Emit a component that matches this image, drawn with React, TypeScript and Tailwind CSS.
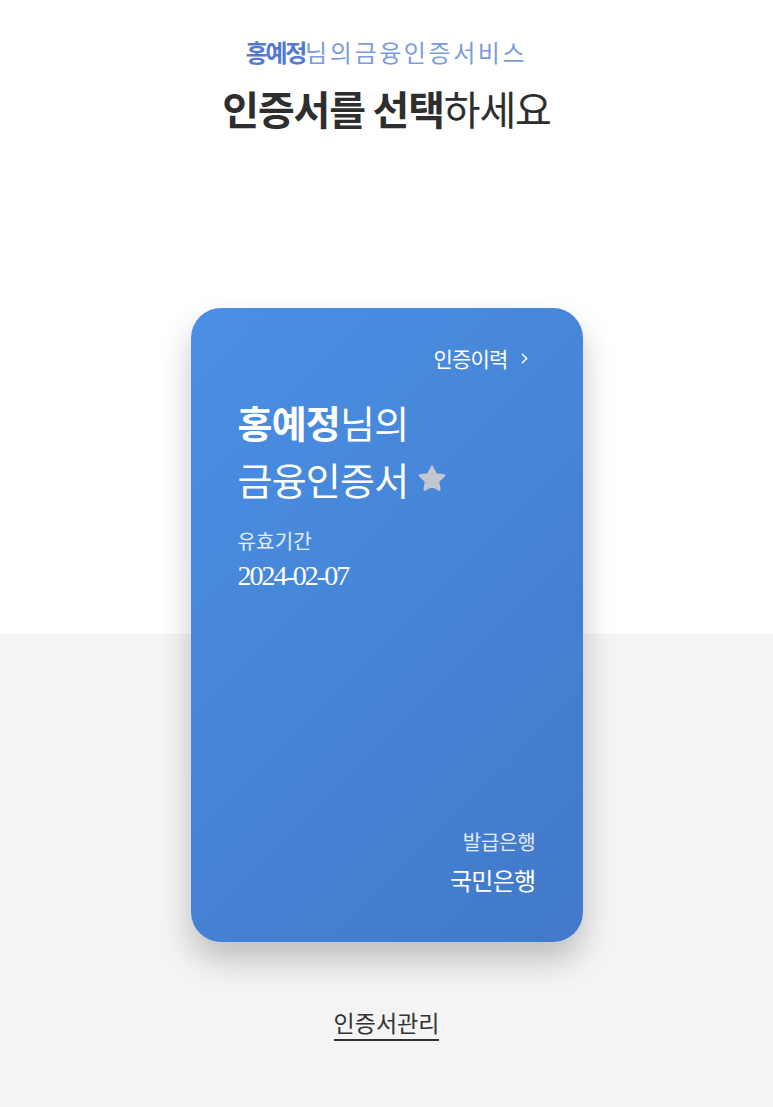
import { ChevronRight } from 'lucide-react';

const kr = "font-['Noto_Sans_CJK_KR','Noto_Sans',sans-serif]";

function StarIcon() {
  return (
    <svg width="32" height="32" viewBox="0 0 24 24" className="shrink-0">
      <path
        d="M12 2.6l2.85 5.8 6.35.92-4.6 4.48 1.08 6.33L12 17.14l-5.68 2.99 1.08-6.33-4.6-4.48 6.35-.92z"
        fill="#c3c7cf"
        stroke="#c3c7cf"
        strokeWidth="1.6"
        strokeLinejoin="round"
      />
    </svg>
  );
}

function CertCard() {
  return (
    <div className="flex h-[634px] w-[392px] flex-col rounded-[30px] bg-[linear-gradient(135deg,#4a90e4_0%,#4684d6_50%,#4279c9_100%)] px-[47px] pb-[47px] pt-[37px] text-white shadow-[0_18px_32px_rgba(0,0,0,0.22)]">
      {/* 인증이력 링크 */}
      <div className="flex items-center justify-end pr-[3px]">
        <span className="text-[21px] leading-[26px] tracking-[-0.8px]">인증이력</span>
        <ChevronRight size={17} strokeWidth={2.2} className="ml-[8px]" />
      </div>

      <div className="mt-[22px] text-[38px] leading-[57px] tracking-[-0.8px]">
        <p>
          <span className="font-bold">홍예정</span>님의
        </p>
        <p className="flex items-center gap-[8px]">
          금융인증서
          <StarIcon />
        </p>
      </div>

      <p className="mt-[21px] text-[20px] leading-[26px] tracking-[0.2px] text-white/85">유효기간</p>
      <p className="mt-[7px] font-['Liberation_Serif',serif] text-[28px] leading-[30px] tracking-[-2px]">
        2024-02-07
      </p>

      {/* 발급은행 */}
      <div className="mt-auto flex flex-col items-end">
        <p className="text-[20px] leading-[26px] tracking-[-0.2px] text-white/85">발급은행</p>
        <p className="mt-[10px] text-[24px] leading-[30px] tracking-[-0.7px]">국민은행</p>
      </div>
    </div>
  );
}

export default function App() {
  return (
    <div
      className={`${kr} flex min-h-[1107px] w-full flex-col items-center bg-[linear-gradient(to_bottom,#ffffff_634px,#f4f4f4_634px)]`}
    >
      <header className="flex flex-col items-center pt-[36px]">
        <p className="text-[24px] leading-[32px]">
          <span className="font-bold tracking-[-2.3px] text-[#5479d2]">홍예정</span>
          <span className="tracking-[2.6px] text-[#7d9be0]">님의금융인증서비스</span>
        </p>
        <h1 className="mt-[16px] text-[40px] leading-[48px] tracking-[-1.2px] text-[#2e2e2e]">
          <span className="font-bold">인증서를 선택</span>하세요
        </h1>
      </header>

      <div className="mt-[176px]">
        <CertCard />
      </div>

      <button className="mt-[66px] border-b-[2px] border-[#333] pb-[3px] text-[23px] leading-[28px] tracking-[0px] text-[#333]">
        인증서관리
      </button>
    </div>
  );
}
